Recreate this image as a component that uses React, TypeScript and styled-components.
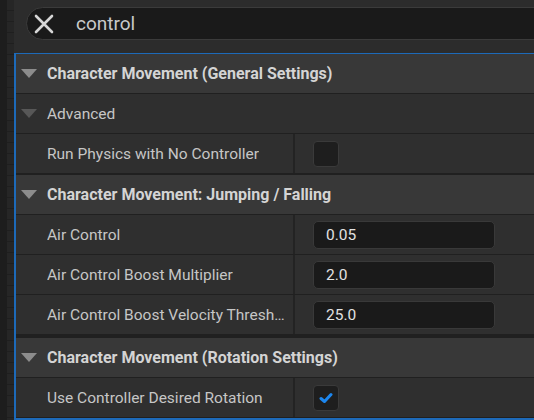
import React from 'react';
import styled, { createGlobalStyle } from 'styled-components';

const GlobalStyle = createGlobalStyle`
  html, body {
    margin: 0;
    padding: 0;
    background: #1c1c1c;
    font-family: Roboto, "Noto Sans", "Liberation Sans", sans-serif;
  }
`;

const Frame = styled.div`
  display: flex;
  width: 534px;
  height: 420px;
  overflow: hidden;
`;

const Gutter = styled.div`
  width: 14px;
  flex: none;
  display: flex;
`;

const GutterDark = styled.div`
  width: 7px;
  background: #1d1d1d;
`;

const GutterLight = styled.div`
  width: 7px;
  background: repeating-linear-gradient(
    to bottom,
    #262626 0px,
    #262626 10px,
    #1f1f1f 10px,
    #1f1f1f 11px
  );
`;

const Main = styled.div`
  flex: 1;
  display: flex;
  flex-direction: column;
  background: #2c2c2c;
  min-width: 0;
`;

const SearchArea = styled.div`
  height: 53px;
  flex: none;
  padding: 7px 0 0 12px;
  box-sizing: border-box;
`;

const SearchField = styled.div`
  height: 33px;
  box-sizing: border-box;
  display: flex;
  align-items: center;
  margin-right: -40px;
  background: #1a1a1a;
  border: 1px solid #3b3b3b;
  border-radius: 17px;
  padding-left: 5px;
`;

const ClearIcon = styled.svg`
  width: 24px;
  height: 24px;
  flex: none;
`;

const SearchText = styled.span`
  margin-left: 20px;
  font-size: 19px;
  color: #c9c9c9;
`;

const Panel = styled.div`
  flex: 1;
  display: flex;
  flex-direction: column;
  border-top: 1px solid #1d6ab9;
  border-left: 2px solid #1d6ab9;
  border-bottom: 2px solid #1d6ab9;
  background: #202020;
  margin-bottom: 1px;
`;

const Category = styled.div<{ $gap: number }>`
  height: 39px;
  flex: none;
  display: flex;
  align-items: center;
  background: #383838;
  margin-top: ${p => p.$gap}px;
  margin-bottom: 1px;
`;

const Arrow = styled.div<{ $dim?: boolean }>`
  width: 0;
  height: 0;
  margin-left: 5px;
  margin-right: 10px;
  border-left: 8px solid transparent;
  border-right: 8px solid transparent;
  border-top: 9px solid ${p => (p.$dim ? '#575757' : '#8c8c8c')};
`;

const CategoryTitle = styled.span`
  font-size: 16px;
  font-weight: 700;
  color: #d4d4d4;
`;

const Group = styled.div`
  height: 39px;
  flex: none;
  display: flex;
  align-items: center;
  background: #2f2f2f;
  margin-bottom: 1px;
`;

const GroupTitle = styled.span`
  font-size: 15.5px;
  color: #c6c6c6;
`;

const Row = styled.div`
  height: 39px;
  flex: none;
  display: flex;
  background: #2f2f2f;
  margin-bottom: 1px;
`;

const NameCell = styled.div`
  width: 279px;
  flex: none;
  display: flex;
  align-items: center;
  padding-left: 31px;
  padding-right: 7px;
  box-sizing: border-box;
  border-right: 2px solid #232323;
`;

const Name = styled.span`
  font-size: 15.5px;
  color: #c6c6c6;
  white-space: nowrap;
  overflow: hidden;
  text-overflow: ellipsis;
`;

const ValueCell = styled.div`
  flex: 1;
  display: flex;
  align-items: center;
  padding-left: 18px;
`;

const NumberBox = styled.div`
  width: 182px;
  height: 28px;
  box-sizing: border-box;
  display: flex;
  align-items: center;
  padding-left: 12px;
  background: #1a1a1a;
  border: 1px solid #393939;
  border-radius: 5px;
  font-size: 15.5px;
  color: #e2e2e2;
`;

const CheckBox = styled.div`
  width: 26px;
  height: 26px;
  box-sizing: border-box;
  display: flex;
  align-items: center;
  justify-content: center;
  background: #1e1e1e;
  border: 1px solid #3a3a3a;
  border-radius: 4px;
`;

const Check = () => (
  <svg width="14" height="12" viewBox="0 0 14 12">
    <path d="M2 6.5 L5.5 9.5 L12 2.5" fill="none" stroke="#1c86ee" strokeWidth="3" strokeLinecap="round" strokeLinejoin="round" />
  </svg>
);

type Prop =
  | { kind: 'number'; name: string; value: string }
  | { kind: 'bool'; name: string; value: boolean };

const PropRow: React.FC<{ prop: Prop }> = ({ prop }) => (
  <Row>
    <NameCell>
      <Name>{prop.name}</Name>
    </NameCell>
    <ValueCell>
      {prop.kind === 'number' ? (
        <NumberBox>{prop.value}</NumberBox>
      ) : (
        <CheckBox>{prop.value && <Check />}</CheckBox>
      )}
    </ValueCell>
  </Row>
);

const App: React.FC = () => {
  return (
    <>
      <GlobalStyle />
      <Frame>
        <Gutter>
          <GutterDark />
          <GutterLight />
        </Gutter>
        <Main>
          <SearchArea>
            <SearchField>
              <ClearIcon viewBox="0 0 24 24">
                <path d="M4 4 L20 20 M20 4 L4 20" stroke="#d6d6d6" strokeWidth="2.6" strokeLinecap="round" />
              </ClearIcon>
              <SearchText>control</SearchText>
            </SearchField>
          </SearchArea>
          <Panel>
            <Category $gap={0}>
              <Arrow />
              <CategoryTitle>Character Movement (General Settings)</CategoryTitle>
            </Category>
            <Group>
              <Arrow $dim />
              <GroupTitle>Advanced</GroupTitle>
            </Group>
            <PropRow prop={{ kind: 'bool', name: 'Run Physics with No Controller', value: false }} />
            <Category $gap={1}>
              <Arrow />
              <CategoryTitle>Character Movement: Jumping / Falling</CategoryTitle>
            </Category>
            <PropRow prop={{ kind: 'number', name: 'Air Control', value: '0.05' }} />
            <PropRow prop={{ kind: 'number', name: 'Air Control Boost Multiplier', value: '2.0' }} />
            <PropRow prop={{ kind: 'number', name: 'Air Control Boost Velocity Threshold', value: '25.0' }} />
            <Category $gap={3}>
              <Arrow />
              <CategoryTitle>Character Movement (Rotation Settings)</CategoryTitle>
            </Category>
            <PropRow prop={{ kind: 'bool', name: 'Use Controller Desired Rotation', value: true }} />
          </Panel>
        </Main>
      </Frame>
    </>
  );
};

export default App;
